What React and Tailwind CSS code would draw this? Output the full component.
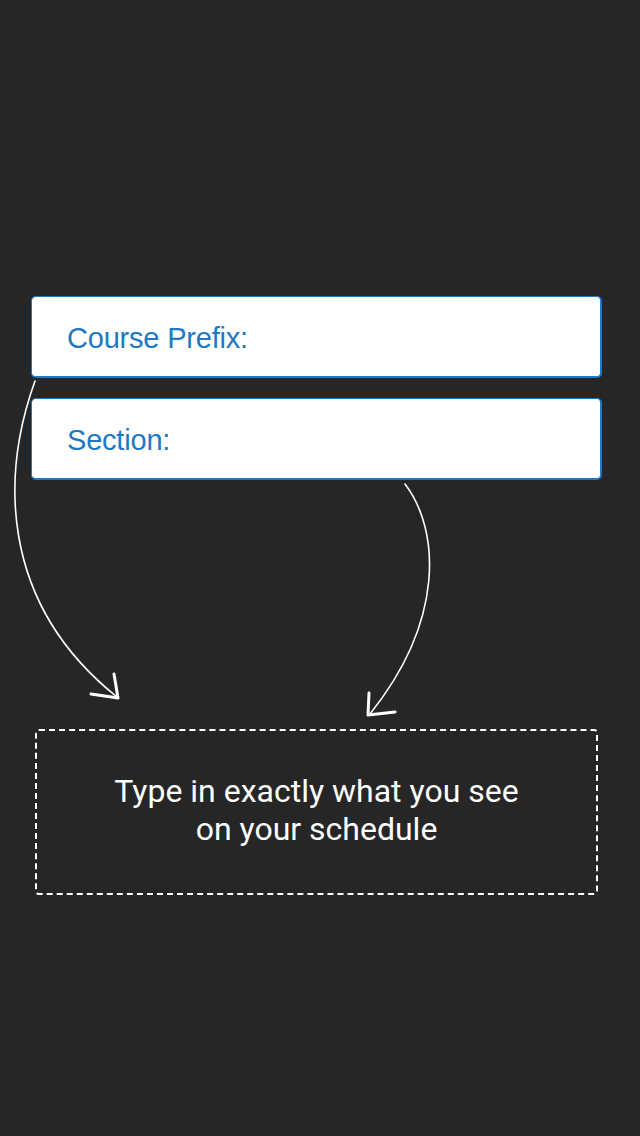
export default function App() {
  return (
    <div className="relative min-h-[1136px] w-full bg-[#262626] pt-[296px] pl-[31px] pr-[38px]">
      <div className="flex flex-col gap-[20px]">
        <div className="flex h-[82px] items-center rounded-[5px] border-t border-l border-r-2 border-b-2 border-[#1f78c1] bg-white pl-[35px] pt-[3px]">
          <span className="text-[29px] leading-none tracking-[-0.2px] text-[#1f78c1]" style={{ fontFamily: '"Liberation Sans", Arial, sans-serif' }}>
            Course Prefix:
          </span>
        </div>
        <div className="flex h-[82px] items-center rounded-[5px] border-t border-l border-r-2 border-b-2 border-[#1f78c1] bg-white pl-[35px] pt-[3px]">
          <span className="text-[29px] leading-none tracking-[-0.2px] text-[#1f78c1]" style={{ fontFamily: '"Liberation Sans", Arial, sans-serif' }}>
            Section:
          </span>
        </div>
      </div>
      <div className="ml-[4px] mr-[4px] mt-[249px] flex h-[166px] items-center justify-center rounded-[4px] border-2 border-dashed border-white">
        <p className="mb-[4px] text-center text-[32px] leading-[38px] text-white" style={{ fontFamily: 'Roboto, "Noto Sans", sans-serif' }}>
          Type in exactly what you see
          <br />
          on your schedule
        </p>
      </div>
      <svg className="pointer-events-none absolute left-0 top-0" width="640" height="1136" viewBox="0 0 640 1136" fill="none">
        <path d="M35 381 C 3 470, -4 600, 117 697" stroke="white" strokeWidth="1.6" strokeLinecap="round" />
        <path d="M91 694 L118 698 L114 674" stroke="white" strokeWidth="3" strokeLinecap="round" strokeLinejoin="round" />
        <path d="M405 484 C 440 530, 445 620, 370 714" stroke="white" strokeWidth="1.6" strokeLinecap="round" />
        <path d="M369 693 L368 715 L395 712" stroke="white" strokeWidth="3" strokeLinecap="round" strokeLinejoin="round" />
      </svg>
    </div>
  );
}
